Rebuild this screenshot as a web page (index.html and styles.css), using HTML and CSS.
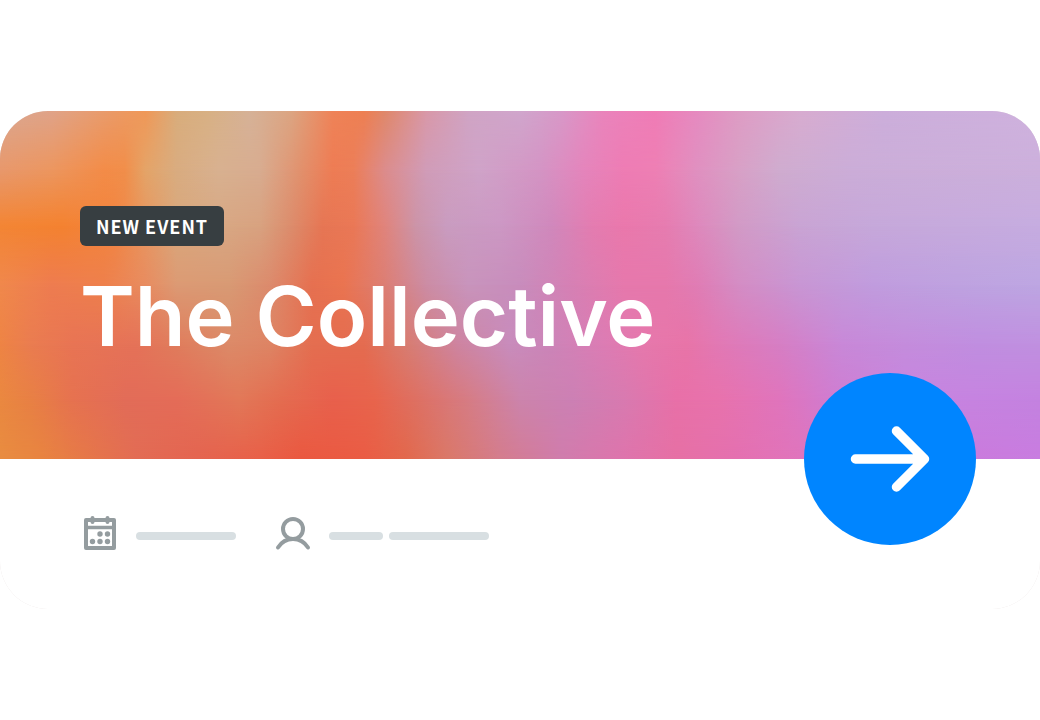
FILE: index.html
```html
<!DOCTYPE html>
<html lang="en">
<head>
    <meta charset="UTF-8">
    <meta name="viewport" content="width=device-width, initial-scale=1">
    <title>The Collective</title>
    <link rel="stylesheet" href="styles.css">
</head>
<body>
    <article class="event-card">
        <header class="hero">
            <div class="art" aria-hidden="true">
                <div class="band band-1"></div>
                <div class="band band-2"></div>
                <div class="band band-3"></div>
                <div class="band band-4"></div>
                <div class="band band-5"></div>
                <div class="band band-6"></div>
                <div class="band band-7"></div>
            </div>
            <span class="tag">NEW EVENT</span>
            <h1>The Collective</h1>
        </header>
        <footer class="details">
            <div class="detail">
                <svg class="icon" viewBox="0 0 40 40" aria-hidden="true">
                    <path d="M6 6h28v28H6z" fill="none" stroke="#949c9f" stroke-width="4" stroke-linejoin="round"/>
                    <path d="M6 13.500h28" stroke="#949c9f" stroke-width="3.500"/>
                    <path d="M12.500 4v4M27.500 4v4" stroke="#949c9f" stroke-width="4" stroke-linecap="round"/>
                    <g fill="#949c9f">
                        <circle cx="20" cy="20" r="2.700"/>
                        <circle cx="27.500" cy="20" r="2.700"/>
                        <circle cx="12.500" cy="27.500" r="2.700"/>
                        <circle cx="20" cy="27.500" r="2.700"/>
                        <circle cx="27.500" cy="27.500" r="2.700"/>
                    </g>
                </svg>
                <span class="line"></span>
            </div>
            <div class="detail">
                <svg class="icon" viewBox="0 0 40 40" aria-hidden="true">
                    <g fill="none" stroke="#949c9f" stroke-width="4" stroke-linecap="round">
                        <circle cx="20" cy="15" r="10"/>
                        <path d="M5 33.500C8.500 28 13.500 25 20 25s11.500 3 15 8.500"/>
                    </g>
                </svg>
                <span class="line-group">
                    <span class="line short"></span>
                    <span class="line"></span>
                </span>
            </div>
            <button class="go" type="button" aria-label="View event">
                <svg viewBox="0 0 172 172" aria-hidden="true">
                    <path d="M51.500 86H120M92.500 58L120.500 86l-28 28" fill="none" stroke="#fff" stroke-width="9.500" stroke-linecap="round" stroke-linejoin="round"/>
                </svg>
            </button>
        </footer>
    </article>
</body>
</html>
```
FILE: styles.css
```css
* {
    box-sizing: border-box;
}
body {
    margin: 0;
    min-height: 100vh;
    display: flex;
    align-items: center;
    background: #fff;
    font-family: Inter, "Liberation Sans", sans-serif;
}
.event-card {
    width: 100%;
    border-radius: 48px;
    background: #e6dede;
}
.hero {
    position: relative;
    padding: 95px 80px 89px;
    border-radius: 48px 48px 0 0;
    overflow: hidden;
}
.tag {
    position: relative;
    display: block;
    width: fit-content;
    padding: 0 16px;
    border-radius: 6px;
    background: #373e41;
    color: #fff;
    font-family: "Noto Sans CJK JP", "Noto Sans", sans-serif;
    font-size: 18px;
    font-weight: 700;
    line-height: 40px;
    letter-spacing: 1px;
}
h1 {
    position: relative;
    margin: 16px 0 0;
    color: #fff;
    font-size: 83px;
    font-weight: 600;
    line-height: 108px;
    white-space: nowrap;
}

/* colour mesh: each band fades in over the one above it */
.art, .band {
    position: absolute;
    inset: 0;
}
.band-1 {
    background: linear-gradient(90deg, #dba78f 0%, #e0a388 5%, #eb9a66 11%, #f09858 14%, #d9ad7c 17%, #d8b184 20%, #d6b298 24%, #dca582 28%, #ef8358 32%, #ee7f52 35%, #e0886a 37%, #d998a8 41%, #d0a4c4 45%, #d0a6cc 50%, #d898c8 54%, #ea84bc 58%, #f07cb6 63%, #e68ac0 67%, #de9cc4 71%, #d8acd0 77%, #ccaedb 85%, #cfb2de 100%);
}
.band-2 {
    background: linear-gradient(90deg, #e8986c 0%, #ec965f 5%, #f38c48 10%, #f18e4a 12%, #e4a468 14%, #d9ac80 17%, #d8b190 21%, #d8ac90 25%, #e2906c 29%, #ee7c54 32%, #ec7e58 34%, #dc8c8c 37%, #d09cb8 41%, #cfa3c8 46%, #d494c4 52%, #e485bc 56%, #ee7cb4 60%, #ee7fb4 63%, #e090c0 67%, #d8a0c6 71%, #cfaccf 75%, #cbadd8 82%, #ccb0dc 100%);
    mask-image: linear-gradient(transparent 0%, #000 17%);
}
.band-3 {
    background: linear-gradient(90deg, #f38534 0%, #f48230 6%, #f28440 11%, #e79660 14%, #d9a87c 17%, #d8a884 21%, #d8a280 25%, #dc8c6c 28%, #e67654 31%, #ea7856 34%, #e0847c 37%, #cc94a8 40%, #c99cc0 43%, #cc98c4 48%, #d088bc 53%, #e47cb0 57%, #ea78ac 60%, #e67cb0 64%, #de88bc 67%, #d29ac6 71%, #c9a4d4 77%, #c6a8da 84%, #c6ace0 100%);
    mask-image: linear-gradient(transparent 17%, #000 33%);
}
.band-4 {
    background: linear-gradient(90deg, #f0884c 0%, #ee7c50 5%, #ee804c 10%, #e88c60 14%, #dc9a74 17%, #d89a74 22%, #dc8a6c 26%, #e67050 30%, #ea7450 33%, #dc7e74 37%, #cc8ca4 41%, #c894bc 45%, #c88cbc 50%, #d680b4 55%, #e678ac 60%, #e678ac 64%, #e07cb4 67%, #d48cc4 71%, #c896d4 77%, #c09cde 84%, #bea2e0 92%, #bda6e2 100%);
    mask-image: linear-gradient(transparent 33%, #000 50%);
}
.band-5 {
    background: linear-gradient(90deg, #ee8444 0%, #ea7c50 3%, #e87454 7%, #e57258 13%, #e07c5c 17%, #dc8a68 22%, #de8464 26%, #e46e50 30%, #e46c50 35%, #d87c70 39%, #ce84a0 44%, #c88cbc 49%, #cc84b8 53%, #dc7cb4 58%, #e678ac 62%, #e874a8 66%, #e278b4 69%, #d67ec4 75%, #c888d8 81%, #c48cdc 87%, #c08ee0 94%, #c090e0 100%);
    mask-image: linear-gradient(transparent 50%, #000 67%);
}
.band-6 {
    background: linear-gradient(90deg, #ea8840 0%, #e88044 3%, #e67250 7%, #e26c58 12%, #e46c58 17%, #e27858 23%, #e46c50 27%, #e8604c 32%, #e8644c 36%, #de7062 40%, #d67c84 45%, #cc84ac 50%, #cc80b4 55%, #d87ab0 60%, #e870a8 65%, #e872ac 69%, #e074bc 75%, #d07cd0 80%, #c884e0 87%, #c482e0 100%);
    mask-image: linear-gradient(transparent 67%, #000 83%);
}
.band-7 {
    background: linear-gradient(90deg, #e88c40 0%, #e88440 4%, #e67848 8%, #e26c54 13%, #e46450 19%, #e86048 25%, #ea5840 29%, #ea5c44 35%, #e2684c 39%, #da7868 43%, #d47c8c 48%, #d07cac 54%, #de74ac 60%, #e670a4 65%, #e470b0 71%, #e074bc 77%, #cc78d8 87%, #c87ce0 100%);
    mask-image: linear-gradient(transparent 83%, #000 100%);
}

.details {
    position: relative;
    display: flex;
    align-items: center;
    gap: 37px;
    min-height: 150px;
    padding: 0 80px;
    border-radius: 0 0 48px 48px;
    background: #fff;
}
.detail {
    display: flex;
    align-items: center;
    gap: 16px;
}
.icon {
    width: 40px;
    height: 40px;
}
.line-group {
    display: flex;
    gap: 6px;
}
.line {
    width: 100px;
    height: 8px;
    margin-top: 4px;
    border-radius: 4px;
    background: #d8dfe2;
}
.line.short {
    width: 54px;
}
/* sits half over the artwork */
.go {
    position: absolute;
    top: -86px;
    right: 64px;
    width: 172px;
    height: 172px;
    padding: 0;
    border: none;
    border-radius: 50%;
    background: #0085ff;
    cursor: pointer;
}
.go svg {
    display: block;
}
.go:hover {
    background: #0077e6;
}
```
